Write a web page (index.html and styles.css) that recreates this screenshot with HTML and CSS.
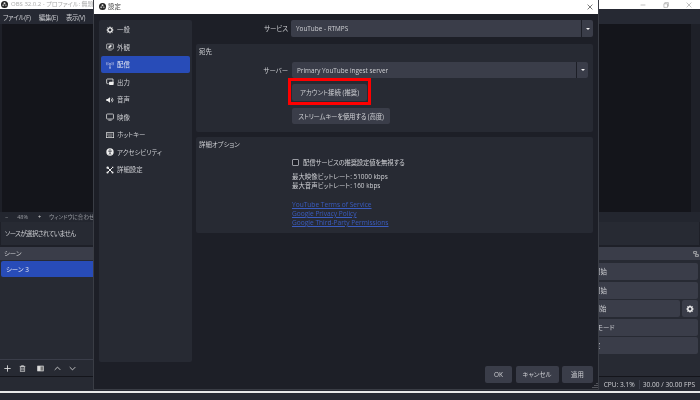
FILE: index.html
```html
<!DOCTYPE html>
<html lang="ja">
<head>
<meta charset="utf-8">
<title>設定</title>
<link rel="stylesheet" href="styles.css">
</head>
<body>
<div class="desktop">
  <div class="main">
    <div class="titlebar">
      <svg class="logo" viewBox="0 0 12 12"><circle cx="6" cy="6" r="6" fill="#222"/><circle cx="6" cy="4" r="1.7" fill="#ddd"/><circle cx="3.8" cy="7.3" r="1.7" fill="#aaa"/><circle cx="8.2" cy="7.3" r="1.7" fill="#888"/></svg>
      <span class="title-text">OBS 32.0.2 - プロファイル: 無題 -</span>
      <div class="winctl">
        <svg viewBox="0 0 10 10"><path d="M1 5h8" stroke="#999" stroke-width="1"/></svg>
        <svg viewBox="0 0 10 10"><path d="M1.5 3h6v6h-6zM3 3V1h6v6H7.500" fill="none" stroke="#999"/></svg>
        <svg viewBox="0 0 10 10"><path d="M1 1l8 8M9 1l-8 8" stroke="#999"/></svg>
      </div>
    </div>
    <div class="menubar"><span>ファイル(F)</span><span>編集(E)</span><span>表示(V)</span></div>
    <div class="preview-wrap">
      <div class="preview"></div>
    </div>
    <div class="zoombar"><span class="zm">−</span><span class="zp">48%</span><span class="zm zplus">+</span><span class="zfit">ウィンドウに合わせて</span></div>
    <div class="nosource">ソースが選択されていません</div>
    <div class="docks">
      <div class="scenes">
        <div class="dock-head">シーン</div>
        <div class="scene-list"><div class="scene-item">シーン 3</div></div>
        <div class="scene-tools">
          <svg viewBox="0 0 10 10"><path d="M5 .5v9M.5 5h9" stroke="#e4e4e4" stroke-width="1.200"/></svg>
          <svg viewBox="0 0 10 10"><path d="M1 2h8M3.500 2V1h3v1M2 2.500h6v7H2zM4 4v4M6 4v4" fill="none" stroke="#ddd"/></svg>
          <svg class="wide" viewBox="0 0 10 10"><rect x="1" y="1.500" width="8" height="7" fill="#777" stroke="#ddd"/><rect x="1" y="1.500" width="4" height="7" fill="#ddd"/></svg>
          <svg class="wide" viewBox="0 0 10 10"><path d="M1 7l4-4 4 4" fill="none" stroke="#ddd" stroke-width="1.200"/></svg>
          <svg viewBox="0 0 10 10"><path d="M1 3l4 4 4-4" fill="none" stroke="#ddd" stroke-width="1.200"/></svg>
        </div>
      </div>
      <div class="controls">
        <div class="dock-head ctl-head"><svg viewBox="0 0 10 10"><path d="M1 1h5v3H1zM4 6h5v3H4z" fill="none" stroke="#ddd"/></svg></div>
        <div class="ctl-rows">
          <div class="ctl">配信開始</div>
          <div class="ctl">録画開始</div>
          <div class="ctl-split">
            <div class="ctl grow">仮想カメラ開始</div>
            <div class="ctl gearbtn"><svg viewBox="0 0 12 12"><circle cx="6" cy="6" r="3.300" fill="none" stroke="#f2f2f2" stroke-width="2.200"/><path d="M6 .5v2M6 9.500v2M.5 6h2M9.500 6h2M2.100 2.100l1.500 1.500M8.400 8.400l1.500 1.500M9.900 2.100L8.400 3.600M3.600 8.400L2.100 9.900" stroke="#f2f2f2" stroke-width="1.400"/></svg></div>
          </div>
          <div class="ctl">スタジオモード</div>
          <div class="ctl">設定</div>
        </div>
      </div>
    </div>
    <div class="statusbar"><span class="cpu">CPU: 3.1%</span><span class="fps">30.00 / 30.00 FPS</span></div>
  </div>
  <div class="taskline"></div>
  <div class="taskbar"></div>

  <div class="dialog">
    <div class="dlg-title">
      <svg class="logo dlg-logo" viewBox="0 0 12 12"><circle cx="6" cy="6" r="6" fill="#222"/><circle cx="6" cy="4" r="1.7" fill="#ddd"/><circle cx="3.800" cy="7.300" r="1.700" fill="#aaa"/><circle cx="8.200" cy="7.300" r="1.700" fill="#888"/></svg>
      <span class="dlg-name">設定</span>
      <svg class="dlg-close" viewBox="0 0 10 10"><path d="M1 1l8 8M9 1l-8 8" stroke="#222" stroke-width="1"/></svg>
    </div>
    <div class="dlg-body">
      <nav class="side">
        <div class="nav"><svg viewBox="0 0 12 12"><circle cx="6" cy="6" r="3.200" fill="none" stroke="#eee" stroke-width="2"/><path d="M6 .8v2M6 9.200v2M.8 6h2M9.200 6h2M2.300 2.300l1.400 1.400M8.300 8.300l1.400 1.400M9.700 2.300L8.300 3.700M3.700 8.300L2.300 9.700" stroke="#eee" stroke-width="1.300"/></svg><span>一般</span></div>
        <div class="nav"><svg viewBox="0 0 12 12"><rect x="1" y="1.500" width="10" height="7.500" rx="1" fill="none" stroke="#eee"/><path d="M3.500 11h5M4 5.500l3-2.500 1.500 1.500L6 7H4z" stroke="#eee" fill="#eee" stroke-width=".7"/></svg><span>外観</span></div>
        <div class="nav active"><svg viewBox="0 0 12 12"><path d="M6 4.500V11M4.500 10.500h3" stroke="#dde" stroke-width="1"/><circle cx="6" cy="4" r="1" fill="#dde"/><path d="M3.500 2.200a3 3 0 0 0 0 3.600M8.500 2.200a3 3 0 0 1 0 3.600M1.500 1.500a5 5 0 0 0 0 5M10.500 1.500a5 5 0 0 1 0 5" fill="none" stroke="#dde" stroke-width=".8"/></svg><span>配信</span></div>
        <div class="nav"><svg viewBox="0 0 12 12"><path d="M1 8V2.500A1 1 0 0 1 2 1.500h8.500V6" fill="none" stroke="#eee" stroke-width="1.200"/><rect x="4.500" y="5.500" width="7" height="5" rx="1" fill="#eee"/><path d="M1 8.500h3" stroke="#eee"/></svg><span>出力</span></div>
        <div class="nav"><svg viewBox="0 0 12 12"><path d="M.5 4.500h2L6 2v8L2.500 7.500h-2z" fill="#eee"/><path d="M7.500 4a2.500 2.500 0 0 1 0 4M9 2.500a5 5 0 0 1 0 7" fill="none" stroke="#eee" stroke-width="1.100"/></svg><span>音声</span></div>
        <div class="nav"><svg viewBox="0 0 12 12"><rect x=".8" y="1.500" width="10.400" height="7.500" rx="1.200" fill="none" stroke="#eee" stroke-width="1.100"/><path d="M3.500 10.800h5" stroke="#eee" stroke-width="1.100"/></svg><span>映像</span></div>
        <div class="nav"><svg viewBox="0 0 12 12"><rect x=".5" y="2.500" width="11" height="7.500" fill="none" stroke="#eee"/><path d="M2 4.500h8M2 6.200h8M3 8h6" stroke="#ddd" stroke-dasharray="1 .5"/></svg><span>ホットキー</span></div>
        <div class="nav"><svg viewBox="0 0 12 12"><circle cx="6" cy="6" r="5.500" fill="#eee"/><circle cx="6" cy="3" r="1" fill="#272a33"/><path d="M3 4.500l3 .7 3-.7M6 5v2.500M6 7.500L4.500 10M6 7.500L7.500 10" fill="none" stroke="#272a33"/></svg><span>アクセシビリティ</span></div>
        <div class="nav"><svg viewBox="0 0 12 12"><path d="M1.500 1.500l9 9M10.500 1.500l-9 9" stroke="#eee" stroke-width="1.500"/><circle cx="2.300" cy="9.700" r="1.600" fill="#eee"/><circle cx="2.500" cy="2.500" r="1.800" fill="#eee"/><path d="M8.500 1h2.500v2.500z" fill="#eee"/><circle cx="9.800" cy="9.800" r="1.500" fill="#eee"/></svg><span>詳細設定</span></div>
      </nav>
      <section class="content">
        <div class="svc-row">
          <label class="svc-label">サービス</label>
          <div class="combo"><span class="combo-text">YouTube - RTMPS</span><span class="combo-arrow"></span></div>
        </div>
        <div class="group dest">
          <h2>宛先</h2>
          <div class="server-row">
            <label class="srv-label">サーバー</label>
            <div class="combo srv"><span class="combo-text">Primary YouTube ingest server</span><span class="combo-arrow"></span></div>
          </div>
          <div class="redbox"><button class="btn acct">アカウント接続 (推奨)</button></div>
          <button class="btn key">ストリームキーを使用する (高度)</button>
        </div>
        <div class="group adv">
          <h2>詳細オプション</h2>
          <div class="check"><span class="box"></span><span class="check-label">配信サービスの推奨設定値を無視する</span></div>
          <div class="limits">
            <div>最大映像ビットレート: 51000 kbps</div>
            <div>最大音声ビットレート: 160 kbps</div>
          </div>
          <div class="links">
            <a>YouTube Terms of Service</a>
            <a>Google Privacy Policy</a>
            <a>Google Third-Party Permissions</a>
          </div>
        </div>
      </section>
    </div>
    <div class="dlg-foot">
      <button class="btn ok">OK</button>
      <button class="btn cancel">キャンセル</button>
      <button class="btn apply">適用</button>
    </div>
    <svg class="grip" viewBox="0 0 6 6"><path d="M5 0v1M3 2v1M5 2v1M1 4v1M3 4v1M5 4v1" stroke="#8a8c92" stroke-width="1"/></svg>
  </div>
</div>
</body>
</html>
```

FILE: styles.css
```css
* { box-sizing: border-box; }
html, body { margin: 0; padding: 0; }
body { background: #1d1f27; overflow: hidden; }
.desktop {
  position: relative; width: 700px; height: 400px; overflow: hidden;
  display: flex; flex-direction: column;
  font-family: "Open Sans", "Noto Sans CJK JP", sans-serif;
  font-feature-settings: "palt";
  font-size: 6.4px; line-height: 9px; color: #cfd0d4;
  filter: blur(.3px);
}
.main { height: 391px; flex: none; display: flex; flex-direction: column; background: #1e2028; }
.titlebar { height: 9px; flex: none; background: #fff; display: flex; align-items: center; padding-left: 1px; color: #aaa; }
.logo { width: 7px; height: 7px; flex: none; }
.title-text { margin-left: 3px; font-size: 6px; }
.winctl { margin-left: auto; display: flex; gap: 17px; padding-right: 8px; }
.winctl svg { width: 6px; height: 6px; display: block; }
.menubar { height: 15px; flex: none; display: flex; gap: 8px; align-items: center; padding-left: 3px; padding-top: 1px; background: #262933; letter-spacing: -.2px; }
.preview-wrap { height: 188px; flex: none; display: flex; padding-left: 2px; background: #1e2028; }
.preview { width: 689px; background: #14151b; }
.zoombar { height: 10px; flex: none; display: flex; align-items: center; padding-left: 5px; color: #9b9da3; font-size: 5.500px; background: #23262f; }
.zp { margin-left: 9px; }
.zplus { margin-left: 10px; color: #ddd; }
.zfit { margin-left: 8px; }
.nosource { height: 23px; flex: none; display: flex; align-items: center; padding-left: 4px; margin: 0 1px; background: #272a33; letter-spacing: -.55px; }
.docks { flex: 1; display: flex; margin-top: 2px; gap: 2px; min-height: 0; }
.scenes { flex: 1; display: flex; flex-direction: column; }
.dock-head { height: 13px; flex: none; background: #3a3d49; padding-left: 4px; display: flex; align-items: center; }
.scene-list { flex: 1; background: #272a33; padding-top: 1px; }
.scene-item { height: 16px; margin-left: 1px; background: #284cb8; border-radius: 2px; padding-left: 5px; display: flex; align-items: center; color: #e6e8f2; }
.scene-tools { height: 17px; flex: none; background: #272a33; border-top: 1px solid #3a3d49; display: flex; align-items: center; gap: 8px; padding-left: 4px; }
.scene-tools svg { width: 7px; height: 7px; }
.scene-tools .wide { margin-left: 2.500px; }
.controls { width: 210px; flex: none; display: flex; flex-direction: column; background: #1e2028; padding-right: 2px; }
.ctl-head { justify-content: flex-end; padding-right: 1px; margin-right: -2px; }
.ctl-head svg { width: 6px; height: 6px; }
.ctl-rows { flex: 1; display: flex; flex-direction: column; gap: 1.500px; padding-top: 3px; background: #272a33; margin-right: -2px; padding-right: 2px; }
.ctl { height: 17px; background: #3a3d49; border-radius: 2px; display: flex; align-items: center; justify-content: center; }
.ctl-split { display: flex; gap: 2px; }
.grow { flex: 1; }
.gearbtn { width: 16px; flex: none; }
.gearbtn svg { width: 8px; height: 8px; }
.statusbar { height: 15px; flex: none; display: flex; justify-content: flex-end; align-items: center; background: #272a33; border-top: 1px solid #14151b; padding-right: 5px; font-size: 6.600px; }
.cpu { margin-right: 4px; }
.fps { border-left: 1px solid #3a3d49; padding-left: 3px; }
.taskline { height: 2px; flex: none; background: #e8e8e8; }
.taskbar { flex: 1; background: #262932; }

.dialog {
  position: absolute; left: 94px; top: 0; width: 504px; height: 389px;
  background: #1d1f27; display: flex; flex-direction: column;
  box-shadow: 0 0 0 1px #3a3d45;
}
.dlg-title { height: 13.500px; flex: none; background: #fff; display: flex; align-items: center; padding-left: 5px; color: #444; }
.dlg-logo { width: 7px; height: 7px; }
.dlg-name { margin-left: 2px; }
.dlg-close { width: 6px; height: 6px; margin-left: auto; margin-right: 5px; }
.dlg-body { flex: 1; min-height: 0; display: flex; gap: 4px; padding: 6.500px 5px 0; }
.side { width: 93px; flex: none; background: #272a33; border-radius: 2px; padding-top: 1px; display: flex; flex-direction: column; gap: .5px; }
.nav { height: 17px; margin: 0 2px; padding-left: 5px; border-radius: 2px; display: flex; align-items: center; gap: 3px; }
.nav svg { width: 8px; height: 8px; flex: none; }
.nav.active { background: #284cb8; color: #e6e8f2; }
.content { width: 397px; flex: none; display: flex; flex-direction: column; }
.svc-row { height: 17px; flex: none; display: flex; align-items: center; }
.svc-label { width: 93px; text-align: right; padding-right: 1px; }
.combo { flex: 1; height: 17px; margin-left: 2px; background: #3a3d49; border-radius: 2px; display: flex; align-items: center; padding-left: 5px; }
.combo-text { flex: 1; }
.combo-arrow { width: 12px; height: 100%; border-left: 1px solid #1d1f27; display: flex; align-items: center; justify-content: center; }
.combo-arrow::after { content: ""; border: 2.500px solid transparent; border-top: 2.500px solid #f2f2f2; border-bottom: 0; }
.group { background: #272a33; border-radius: 2px; display: flex; flex-direction: column; align-items: flex-start; }
.group h2 { margin: 0; font-size: inherit; font-weight: 400; line-height: 9px; padding-left: 3px; }
.dest { height: 88px; margin-top: 7px; padding-top: 3px; }
.server-row { display: flex; align-items: center; width: 100%; margin-top: 6px; padding-right: 5px; height: 16px; }
.srv-label { width: 93px; text-align: right; padding-right: 1px; }
.srv { height: 16px; margin-left: 3px; }
.redbox { margin: 0 0 0 92px; padding: 2.500px 1px 1.500px; border: 3px solid #f00; height: 27px; display: flex; }
.btn { height: 17px; padding: 0; border: 0; border-radius: 2px; background: #3a3d49; color: #cfd0d4; font: inherit; line-height: 9px; font-feature-settings: "palt"; display: block; }
.acct { width: 75px; }
.key { width: 98px; margin: 3px 0 0 96px; height: 16px; letter-spacing: -.2px; }
.adv { height: 96px; margin-top: 5px; padding-top: 3px; }
.check { margin: 9px 0 0 96px; height: 9px; display: flex; align-items: center; gap: 4px; }
.check-label { letter-spacing: -.2px; }
.box { width: 7px; height: 7px; border: 1px solid #9a9ca3; background: #1d1f27; border-radius: 1px; }
.limits { margin: 5px 0 0 96px; }
.links { margin: 10px 0 0 96px; display: flex; flex-direction: column; font-size: 6.600px; }
.links a { color: #3a5cc0; text-decoration: underline; text-decoration-thickness: .5px; }
.dlg-foot { height: 27px; flex: none; display: flex; justify-content: flex-end; gap: 3.500px; padding: 4px 5px 0 0; }
.ok { width: 27px; }
.cancel { width: 43px; }
.apply { width: 31px; }
.grip { position: absolute; right: 0; bottom: 0; width: 6px; height: 6px; }
```
